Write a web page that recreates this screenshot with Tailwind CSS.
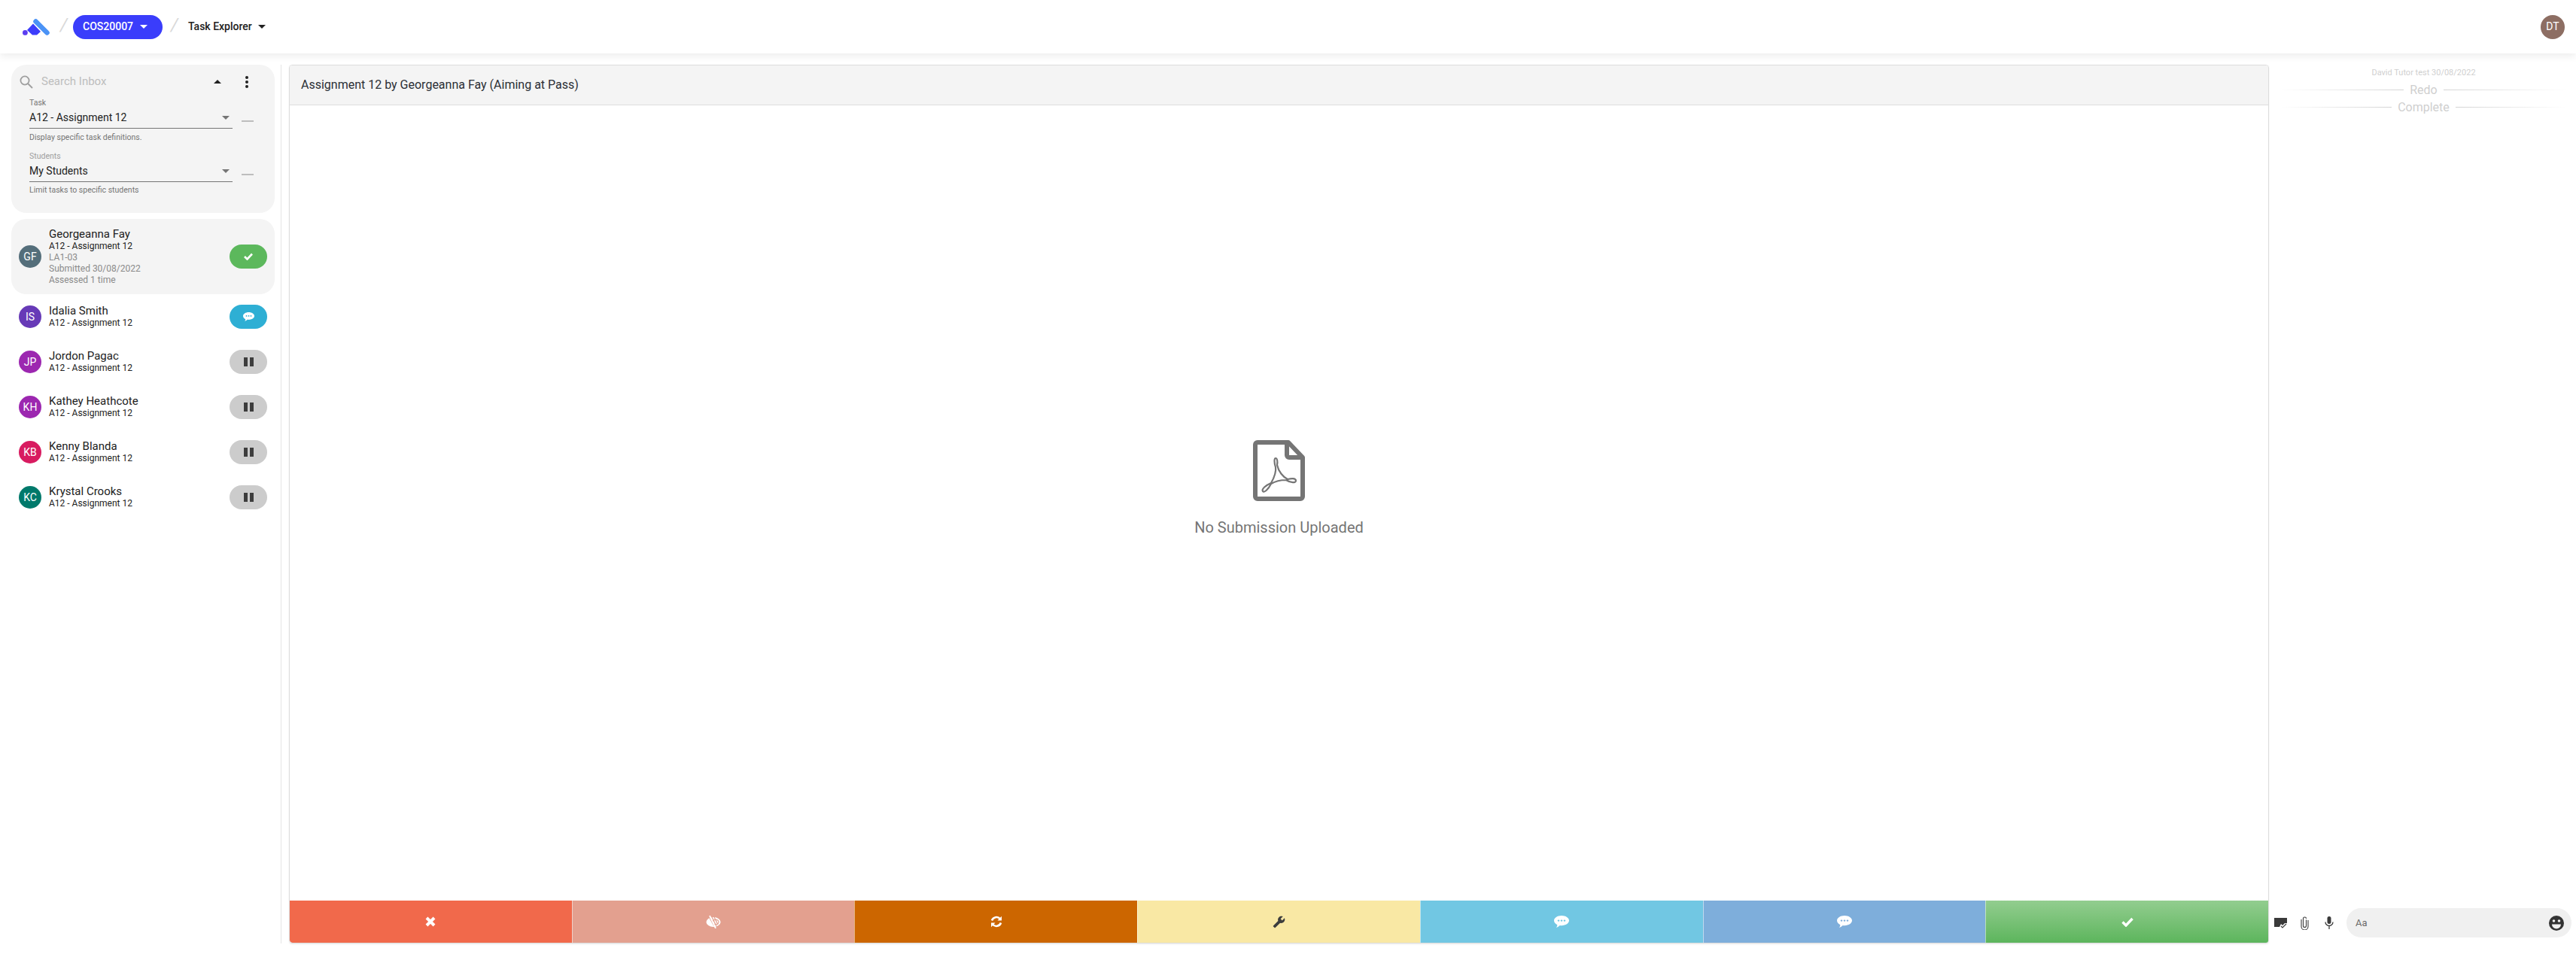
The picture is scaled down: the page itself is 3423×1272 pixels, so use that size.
<!DOCTYPE html>
<html lang="en">
<head>
    <meta charset="UTF-8">
    <script src="https://cdn.jsdelivr.net/npm/@tailwindcss/browser@4"></script>
    <title>Task Explorer</title>
</head>
<body class="bg-white font-['Roboto',sans-serif] text-[#212121] h-screen overflow-hidden flex flex-col">
    <!-- Header -->
    <header class="h-[71px] flex items-center justify-between pl-[30px] pr-[15px] bg-white shadow-[0_4px_10px_rgba(0,0,0,0.07)] relative z-10 shrink-0">
        <div class="flex items-center">
            <svg class="w-[36px] h-[22px]" viewBox="0 0 36 22">
                <circle cx="3.4" cy="18.4" r="3.4" fill="#5b3df0"/>
                <path d="M6 15 14 6.500 24 17 19 21.500H13z" fill="#3d3dfb"/>
                <path d="M17.500 3.500 32.500 18.500" stroke="#4b93f6" stroke-width="6.500" stroke-linecap="round"/>
            </svg>
            <span class="ml-[14px] text-[24px] leading-none text-[#d9d9d9] italic w-[16px] -mt-[6px]">/</span>
            <button class="ml-[1px] h-[32px] w-[119px] rounded-full bg-[#3a3dfb] text-white text-[14px] font-medium flex items-center pl-[13px]">
                COS20007
                <svg class="w-[10px] h-[5px] ml-[9px]" viewBox="0 0 10 5"><path d="M0 0h10L5 5z" fill="#fff"/></svg>
            </button>
            <span class="ml-[11px] text-[24px] leading-none text-[#d9d9d9] italic w-[20px] -mt-[6px]">/</span>
            <span class="ml-[3px] text-[14px] font-medium">Task Explorer</span>
            <svg class="w-[10px] h-[5px] ml-[8px]" viewBox="0 0 10 5"><path d="M0 0h10L5 5z" fill="#212121"/></svg>
        </div>
        <div class="w-[32px] h-[32px] rounded-full bg-[#8d6e63] text-white text-[14px] flex items-center justify-center">DT</div>
    </header>

    <main class="flex flex-1 pt-[15px] pb-[18px] min-h-0">
        <!-- Inbox -->
        <aside class="w-[374px] shrink-0 border-r border-[#e4e4e4] pl-[15px] pr-[8px]">
            <div class="h-[197px] rounded-[20px] bg-[#f4f4f4] relative pt-[10px]">
                <div class="flex items-center h-[25px]">
                    <svg class="w-[18px] h-[18px] ml-[11px]" viewBox="0 0 18 18" fill="none" stroke="#9e9e9e" stroke-width="1.8"><circle cx="7" cy="7" r="5.6"/><path d="M11 11l6 6"/></svg>
                    <span class="ml-[11px] text-[15px] text-[#bdbdbd]">Search Inbox</span>
                    <svg class="w-[10px] h-[5px] ml-[143px]" viewBox="0 0 10 5"><path d="M0 5h10L5 0z" fill="#212121"/></svg>
                    <svg class="w-[4px] h-[16px] ml-[32px]" viewBox="0 0 4 16" fill="#212121"><circle cx="2" cy="2" r="2"/><circle cx="2" cy="8" r="2"/><circle cx="2" cy="14" r="2"/></svg>
                </div>
                <div class="pl-[24px] mt-[9px]">
                    <div class="text-[10.5px] leading-[12px] text-[#757575] pt-[1px]">Task</div>
                    <div class="flex items-center">
                        <div class="w-[270px] h-[28px] border-b border-[#757575] text-[14px] flex items-center justify-between pr-[4px]">
                            A12 - Assignment 12
                            <svg class="w-[10px] h-[5px]" viewBox="0 0 10 5"><path d="M0 0h10L5 5z" fill="#757575"/></svg>
                        </div>
                        <div class="w-[16px] h-[2px] bg-[#bdbdbd] ml-[12px] mt-[8px]"></div>
                    </div>
                    <div class="text-[10.5px] leading-[12px] text-[#757575] mt-[6px]">Display specific task definitions.</div>
                    <div class="text-[10.5px] leading-[12px] text-[#9e9e9e] mt-[13px]">Students</div>
                    <div class="flex items-center">
                        <div class="w-[270px] h-[28px] border-b border-[#757575] text-[14px] flex items-center justify-between pr-[4px]">
                            My Students
                            <svg class="w-[10px] h-[5px]" viewBox="0 0 10 5"><path d="M0 0h10L5 5z" fill="#757575"/></svg>
                        </div>
                        <div class="w-[16px] h-[2px] bg-[#bdbdbd] ml-[12px] mt-[8px]"></div>
                    </div>
                    <div class="text-[10.5px] leading-[12px] text-[#757575] mt-[5px]">Limit tasks to specific students</div>
                </div>
            </div>

            <!-- Task list -->
            <div class="mt-[8px]">
                <div class="h-[100px] rounded-[20px] bg-[#f4f4f4] flex items-center pl-[10px] pr-[10px]">
                    <div class="w-[30px] h-[30px] rounded-full bg-[#546e7a] text-white text-[14px] flex items-center justify-center shrink-0">GF</div>
                    <div class="ml-[10px] flex-1">
                        <div class="text-[15px] leading-[17px]">Georgeanna Fay</div>
                        <div class="text-[12px] leading-[15px]">A12 - Assignment 12</div>
                        <div class="text-[12px] leading-[15px] text-[#8a8a8a]">LA1-03</div>
                        <div class="text-[12px] leading-[15px] text-[#8a8a8a]">Submitted 30/08/2022</div>
                        <div class="text-[12px] leading-[15px] text-[#8a8a8a]">Assessed 1 time</div>
                    </div>
                    <div class="w-[50px] h-[32px] rounded-full bg-[#5cb85c] flex items-center justify-center">
                        <svg class="w-[12px] h-[10px]" viewBox="0 0 12 10" fill="none" stroke="#fff" stroke-width="2.6"><path d="M1 5l3.5 3.5L11 1.5"/></svg>
                    </div>
                </div>
                <div class="h-[60px] flex items-center pl-[10px] pr-[10px]">
                    <div class="w-[30px] h-[30px] rounded-full bg-[#673ab7] text-white text-[14px] flex items-center justify-center shrink-0">IS</div>
                    <div class="ml-[10px] flex-1">
                        <div class="text-[15px] leading-[17px]">Idalia Smith</div>
                        <div class="text-[12px] leading-[15px]">A12 - Assignment 12</div>
                    </div>
                    <div class="w-[50px] h-[32px] rounded-full bg-[#2eafd4] flex items-center justify-center">
                        <svg class="w-[15px] h-[12px]" viewBox="0 0 20 16"><path d="M10 0c5.500 0 10 2.900 10 6.600S15.500 13.200 10 13.200c-.8 0-1.600-.1-2.400-.2C6.500 14.400 4.700 15.500 2.800 15.900c1-1 1.500-2.300 1.500-3.700C1.700 11 0 9 0 6.600 0 2.900 4.500 0 10 0z" fill="#fff"/><g fill="#2eafd4"><circle cx="6" cy="6.600" r="1.200"/><circle cx="10" cy="6.600" r="1.200"/><circle cx="14" cy="6.600" r="1.200"/></g></svg>
                    </div>
                </div>
                <div class="h-[60px] flex items-center pl-[10px] pr-[10px]">
                    <div class="w-[30px] h-[30px] rounded-full bg-[#9c27b0] text-white text-[14px] flex items-center justify-center shrink-0">JP</div>
                    <div class="ml-[10px] flex-1">
                        <div class="text-[15px] leading-[17px]">Jordon Pagac</div>
                        <div class="text-[12px] leading-[15px]">A12 - Assignment 12</div>
                    </div>
                    <div class="w-[50px] h-[32px] rounded-full bg-[#cccccc] flex items-center justify-center gap-[3px]">
                        <div class="w-[5px] h-[12px] bg-[#3d3d3d]"></div><div class="w-[5px] h-[12px] bg-[#3d3d3d]"></div>
                    </div>
                </div>
                <div class="h-[60px] flex items-center pl-[10px] pr-[10px]">
                    <div class="w-[30px] h-[30px] rounded-full bg-[#9c27b0] text-white text-[14px] flex items-center justify-center shrink-0">KH</div>
                    <div class="ml-[10px] flex-1">
                        <div class="text-[15px] leading-[17px]">Kathey Heathcote</div>
                        <div class="text-[12px] leading-[15px]">A12 - Assignment 12</div>
                    </div>
                    <div class="w-[50px] h-[32px] rounded-full bg-[#cccccc] flex items-center justify-center gap-[3px]">
                        <div class="w-[5px] h-[12px] bg-[#3d3d3d]"></div><div class="w-[5px] h-[12px] bg-[#3d3d3d]"></div>
                    </div>
                </div>
                <div class="h-[60px] flex items-center pl-[10px] pr-[10px]">
                    <div class="w-[30px] h-[30px] rounded-full bg-[#d81b60] text-white text-[14px] flex items-center justify-center shrink-0">KB</div>
                    <div class="ml-[10px] flex-1">
                        <div class="text-[15px] leading-[17px]">Kenny Blanda</div>
                        <div class="text-[12px] leading-[15px]">A12 - Assignment 12</div>
                    </div>
                    <div class="w-[50px] h-[32px] rounded-full bg-[#cccccc] flex items-center justify-center gap-[3px]">
                        <div class="w-[5px] h-[12px] bg-[#3d3d3d]"></div><div class="w-[5px] h-[12px] bg-[#3d3d3d]"></div>
                    </div>
                </div>
                <div class="h-[60px] flex items-center pl-[10px] pr-[10px]">
                    <div class="w-[30px] h-[30px] rounded-full bg-[#00796b] text-white text-[14px] flex items-center justify-center shrink-0">KC</div>
                    <div class="ml-[10px] flex-1">
                        <div class="text-[15px] leading-[17px]">Krystal Crooks</div>
                        <div class="text-[12px] leading-[15px]">A12 - Assignment 12</div>
                    </div>
                    <div class="w-[50px] h-[32px] rounded-full bg-[#cccccc] flex items-center justify-center gap-[3px]">
                        <div class="w-[5px] h-[12px] bg-[#3d3d3d]"></div><div class="w-[5px] h-[12px] bg-[#3d3d3d]"></div>
                    </div>
                </div>
            </div>
        </aside>

        <!-- Submission card -->
        <section class="ml-[10px] w-[2631px] shrink-0 border border-[#dddddd] rounded-[4px] flex flex-col overflow-hidden shadow-[0_1px_2px_rgba(0,0,0,0.08)]">
            <div class="h-[53px] shrink-0 bg-[#f4f4f4] border-b border-[#dddddd] flex items-center pl-[15px] text-[16px] text-[#2b2f36]">Assignment 12 by Georgeanna Fay (Aiming at Pass)</div>
            <div class="flex-1 flex flex-col items-center pt-[445px]">
                <svg class="w-[69px] h-[81px]" viewBox="0 0 69 81" fill="none" stroke="#757575">
                    <path d="M3 6a3 3 0 0 1 3-3h41l19 20v52a3 3 0 0 1-3 3H6a3 3 0 0 1-3-3z" stroke-width="6" stroke-linejoin="round"/>
                    <path d="M45 3v17a3 3 0 0 0 3 3h18" stroke-width="6"/>
                    <path d="M30 24C32 24 33 28 32 33 34 42 40 49 46 52 50 51 57 50 57 54 57 57 50 57 44 53 36 53 29 55 24 58 20 66 15 70 13 68 11 65 17 60 24 57 28 50 31 42 30 36 28 30 28 24 30 24z" stroke-width="2.200" stroke-linejoin="round"/>
                </svg>
                <div class="mt-[21px] text-[20px] leading-[28px] text-[#757575]">No Submission Uploaded</div>
            </div>
            <!-- Action bar -->
            <div class="h-[56px] shrink-0 flex">
                <button class="flex-1 bg-[#f1694b] flex items-center justify-center rounded-bl-[4px]">
                    <svg class="w-[14px] h-[14px]" viewBox="0 0 14 14" stroke="#fff" stroke-width="4"><path d="M2 2l10 10M12 2 2 12"/></svg>
                </button>
                <button class="flex-1 bg-[#e3a08f] border-l border-white/50 flex items-center justify-center">
                    <svg class="w-[20px] h-[17px]" viewBox="0 0 20 17" fill="none"><ellipse cx="10" cy="8.500" rx="9.500" ry="6.500" fill="#fff"/><path d="M5 3l6 11M8 2l6 12M11 2l5 10" stroke="#e3a08f" stroke-width="1.300"/><ellipse cx="13" cy="8.500" rx="4" ry="3.200" stroke="#e3a08f" stroke-width="1.200"/><path d="M5 0l8 17" stroke="#fff" stroke-width="1.800"/></svg>
                </button>
                <button class="flex-1 bg-[#cc6600] border-l border-white/50 flex items-center justify-center">
                    <svg class="w-[16px] h-[16px]" viewBox="0 0 16 16" fill="none" stroke="#fff" stroke-width="2.600"><path d="M2 6.500A6.300 6.300 0 0 1 13 4.500M14 9.500A6.300 6.300 0 0 1 3 11.500"/><path d="M15 0.800v5.700H9.500z M1 15.200V9.500h5.500z" fill="#fff" stroke="none"/></svg>
                </button>
                <button class="flex-1 bg-[#f9e8a4] border-l border-white/50 flex items-center justify-center">
                    <svg class="w-[17px] h-[17px]" viewBox="0 0 24 24"><path transform="translate(24 0) scale(-1 1)" d="M22.700 19l-9.100-9.100c.9-2.300.4-5-1.500-6.900-2-2-5-2.400-7.400-1.300L9 6 6 9 1.600 4.700C.4 7.100.9 10.100 2.900 12.100c1.900 1.900 4.600 2.400 6.900 1.500l9.100 9.100c.4.400 1 .4 1.400 0l2.300-2.300c.5-.4.500-1.100.1-1.400z" fill="#3d3d3d"/></svg>
                </button>
                <button class="flex-1 bg-[#71c7e3] border-l border-white/50 flex items-center justify-center">
                    <svg class="w-[20px] h-[16px]" viewBox="0 0 20 16"><path d="M10 0c5.500 0 10 2.900 10 6.600S15.500 13.200 10 13.200c-.8 0-1.600-.1-2.400-.2C6.500 14.400 4.700 15.500 2.800 15.900c1-1 1.500-2.300 1.500-3.700C1.700 11 0 9 0 6.600 0 2.900 4.500 0 10 0z" fill="#fff"/><g fill="#71c7e3"><circle cx="6" cy="6.600" r="1.200"/><circle cx="10" cy="6.600" r="1.200"/><circle cx="14" cy="6.600" r="1.200"/></g></svg>
                </button>
                <button class="flex-1 bg-[#7eaedb] border-l border-white/50 flex items-center justify-center">
                    <svg class="w-[20px] h-[16px]" viewBox="0 0 20 16"><path d="M10 0c5.500 0 10 2.900 10 6.600S15.500 13.200 10 13.200c-.8 0-1.600-.1-2.400-.2C6.500 14.400 4.700 15.500 2.800 15.900c1-1 1.500-2.300 1.500-3.700C1.700 11 0 9 0 6.600 0 2.900 4.500 0 10 0z" fill="#fff"/><g fill="#7eaedb"><circle cx="6" cy="6.600" r="1.200"/><circle cx="10" cy="6.600" r="1.200"/><circle cx="14" cy="6.600" r="1.200"/></g></svg>
                </button>
                <button class="flex-1 bg-gradient-to-b from-[#92cd8f] to-[#5cb55c] border-l border-white/50 flex items-center justify-center">
                    <svg class="w-[16px] h-[13px]" viewBox="0 0 16 13" fill="none" stroke="#fff" stroke-width="3.400"><path d="M1.500 6.500l4.500 4.500 8.500-9"/></svg>
                </button>
            </div>
        </section>

        <!-- Comments -->
        <section class="flex-1 min-w-0 flex flex-col justify-between">
            <div class="pl-[15px] pr-[12px] text-center text-[#cfcfcf]">
                <div class="text-[11px] leading-[14px] mt-[4px]">David Tutor test 30/08/2022</div>
                <div class="flex items-center mt-[4px] h-[23px]">
                    <div class="flex-1 h-[1px] bg-gradient-to-r from-transparent to-[#d4d4d4]"></div>
                    <span class="px-[8px] text-[16px]">Redo</span>
                    <div class="flex-1 h-[1px] bg-gradient-to-l from-transparent to-[#d4d4d4]"></div>
                </div>
                <div class="flex items-center h-[23px]">
                    <div class="flex-1 h-[1px] bg-gradient-to-r from-transparent to-[#d4d4d4]"></div>
                    <span class="px-[8px] text-[16px]">Complete</span>
                    <div class="flex-1 h-[1px] bg-gradient-to-l from-transparent to-[#d4d4d4]"></div>
                </div>
            </div>
            <div class="flex items-center pl-[7px] pr-[6px] mb-[8px]">
                <svg class="w-[17px] h-[14px]" viewBox="0 0 17 14"><path d="M0 0h17v7h-3l-3 3-2-2-2 4H0z" fill="#3a3a3a"/><path d="M9 11l2 2 5-5" stroke="#3a3a3a" stroke-width="1.200" fill="none"/></svg>
                <svg class="w-[11px] h-[18px] ml-[18px]" viewBox="0 0 11 18" fill="none" stroke="#3a3a3a" stroke-width="1.100"><path d="M7.500 4.500V12.500a2 2 0 0 1-4 0V3a2 2 0 0 1 4 0"/><path d="M10 5v8.500a4.500 4.500 0 0 1-9 0V4"/></svg>
                <svg class="w-[12px] h-[17px] ml-[21px]" viewBox="0 0 12 17" fill="#3a3a3a"><rect x="3.500" y="0" width="5" height="10" rx="2.500"/><path d="M1 7.500a5 5 0 0 0 10 0M6 12.500V17" stroke="#3a3a3a" stroke-width="1.300" fill="none"/></svg>
                <div class="ml-[17px] flex-1 h-[39px] rounded-full bg-[#f0f0f0] flex items-center justify-between pl-[12px] pr-[10px]">
                    <span class="text-[13px] text-[#6b6b6b]">Aa</span>
                    <svg class="w-[20px] h-[20px]" viewBox="0 0 20 20"><circle cx="10" cy="10" r="10" fill="#333"/><circle cx="6.500" cy="7" r="1.800" fill="#f0f0f0"/><circle cx="13.500" cy="7" r="1.800" fill="#f0f0f0"/><path d="M4 11.500h12a6 6 0 0 1-12 0z" fill="#f0f0f0"/></svg>
                </div>
            </div>
        </section>
    </main>
</body>
</html>
